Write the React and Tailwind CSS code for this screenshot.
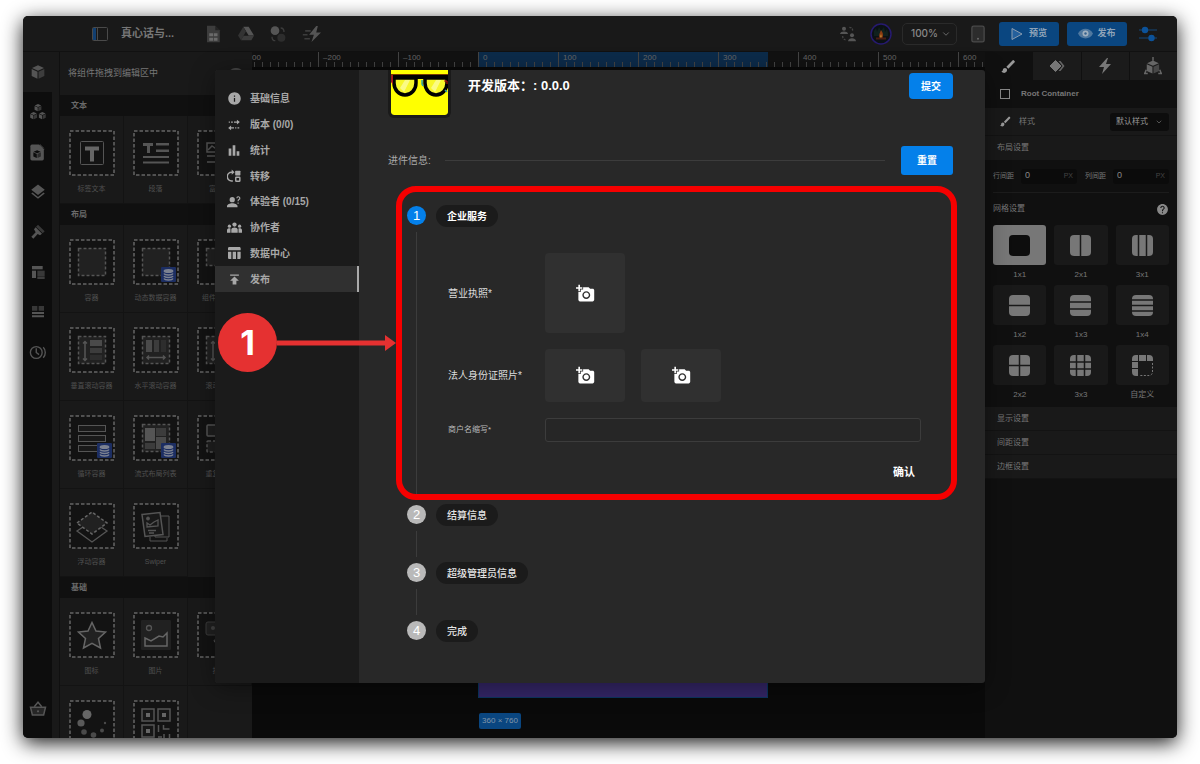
import React, { useState } from 'react';
import clsx from 'clsx';
import {
  MdAddAPhoto,
  MdBarChart,
  MdBrush,
  MdHelp,
  MdInfo,
  MdLayers,
  MdPublish,
  MdTableChart,
} from 'react-icons/md';
import { ChevronDown } from 'lucide-react';

/* ---------- small icons ---------- */

const VersionIcon = () => (
  <svg viewBox="0 0 24 24" className="h-[14px] w-[14px]" fill="currentColor">
    <path d="M17 3l5 4-5 4V8h-5V6h5zM7 13v3h5v2H7v3l-5-4z" />
    <path d="M3 6h2v2H3zM7 6h3v2H7zM14 16h2v2h-2zM18 16h3v2h-3z" />
  </svg>
);

const TransferIcon = () => (
  <svg viewBox="0 0 24 24" className="h-[14px] w-[14px]" fill="none" stroke="currentColor" strokeWidth="2.500">
    <path d="M10 20.500H8A7.500 7.500 0 0 1 8 5.500h2" />
    <path d="M8 1l5 4.500L8 10z" fill="currentColor" stroke="none" />
    <rect x="14" y="3" width="9" height="8" rx="1" fill="currentColor" stroke="none" />
    <rect x="15" y="14" width="7" height="7" rx="1" />
  </svg>
);

const TesterIcon = () => (
  <svg viewBox="0 0 24 24" className="h-[14px] w-[14px]" fill="currentColor">
    <circle cx="9" cy="8" r="4.500" />
    <path d="M0 21v-2c0-3 5-5 9-5s9 2 9 5v2z" />
    <path d="M17 5.500a2.500 2.500 0 1 1 3.500 2.300c-1.500.7-1.500 1.400-1.500 3M19 13v2" fill="none" stroke="currentColor" strokeWidth="2" />
  </svg>
);

const TeamIcon = () => (
  <svg viewBox="0 0 28 22" className="h-3 w-[15px]" fill="currentColor">
    <circle cx="14" cy="4.500" r="4" />
    <circle cx="4.500" cy="7.500" r="3" />
    <circle cx="23.500" cy="7.500" r="3" />
    <path d="M8 20v-6c0-5 12-5 12 0v6zM0 20v-5c0-3 4-4 6.500-3V20zM28 20v-5c0-3-4-4-6.500-3V20z" />
  </svg>
);

const Cube = ({ x = 0, y = 0, s = 1 }) => (
  <g transform={`translate(${x} ${y}) scale(${s})`}>
    <path d="M12 2l9 4-9 4-9-4z" />
    <path d="M2.500 7.500l8.700 4V22l-8.700-4z" />
    <path d="M21.500 7.500l-8.700 4V22l8.700-4z" opacity="0.6" />
  </g>
);

const CubeIcon = () => (
  <svg viewBox="0 0 24 24" className="h-4 w-4" fill="currentColor"><Cube /></svg>
);

const CubesIcon = () => (
  <svg viewBox="0 0 24 24" className="h-4 w-4" fill="currentColor">
    <Cube x={5.500} y={-1} s={0.54} />
    <Cube x={-1} y={11} s={0.54} />
    <Cube x={12} y={11} s={0.54} />
  </svg>
);

const PageCubeIcon = () => (
  <svg viewBox="0 0 24 24" className="h-[19px] w-[19px]" fill="currentColor">
    <path d="M5 2h9l6 6v12a2 2 0 0 1-2 2H5a2 2 0 0 1-2-2V4a2 2 0 0 1 2-2z" />
    <path d="M15 1l6 6h-6z" opacity="0.6" />
    <g fill="#0d0d0d"><Cube x={5.500} y={8} s={0.5} /></g>
  </svg>
);

const BrushHeadIcon = () => (
  <svg viewBox="0 0 24 24" className="h-4 w-4" fill="currentColor">
    <path d="M12 1l10 10-3 3L9 4z" opacity="0.6" />
    <path d="M8.500 5L18 14.500l-3 2.500-3.500-2L5 22l-3-3 6.500-6.500L6 8z" />
  </svg>
);

const LayoutIcon = () => (
  <svg viewBox="0 0 24 24" className="h-4 w-4" fill="currentColor">
    <rect x="3" y="3" width="16" height="5" />
    <rect x="3" y="10" width="6" height="11" />
    <rect x="11" y="10" width="11" height="9" opacity="0.6" />
    <rect x="11" y="20" width="11" height="2" />
  </svg>
);

const ListIcon = () => (
  <svg viewBox="0 0 24 24" className="h-4 w-4" fill="currentColor">
    <path d="M3 3h8v7H3zM13 3h8v7h-8z" opacity="0.6" />
    <path d="M3 12h18v3H3zM3 17h18v3H3z" />
  </svg>
);

const HistoryIcon = () => (
  <svg viewBox="0 0 26 24" className="h-[17px] w-[18px]" fill="none" stroke="currentColor" strokeWidth="2">
    <circle cx="10.500" cy="12" r="8.500" />
    <path d="M10.500 6v6l4 3M20.500 4.500c4 4 4 11 0 15" />
  </svg>
);

const BasketIcon = () => (
  <svg viewBox="0 0 24 24" className="h-[18px] w-[18px]" fill="none" stroke="currentColor" strokeWidth="2">
    <path d="M2 9.500h20L19.500 20h-15z" fill="#262626" />
    <path d="M7 9l5-6 5 6" />
    <circle cx="12" cy="15" r="1.500" fill="currentColor" stroke="none" />
  </svg>
);

const PanelIcon = () => (
  <svg viewBox="0 0 16 14" className="h-[14px] w-4" fill="none">
    <rect x="0.500" y="0.500" width="15" height="13" rx="1" stroke="#4a4a4a" />
    <rect x="1" y="1" width="3" height="12" fill="#123f70" />
    <path d="M5.500 1v12" stroke="#4a4a4a" />
  </svg>
);

const SheetIcon = () => (
  <svg viewBox="0 0 24 24" className="h-[18px] w-[18px]">
    <path d="M4 1h11l6 6v16H4z" fill="#3c3c3c" />
    <path d="M15 1v6h6z" fill="#232323" />
    <path d="M7 11h5v4H7zM13 11h5v4h-5zM7 17h5v4H7zM13 17h5v4h-5z" fill="#6a6a6a" />
  </svg>
);

const DriveIcon = () => (
  <svg viewBox="0 0 24 22" className="h-[15px] w-4">
    <path d="M8 1h8l8 13h-8z" fill="#555" />
    <path d="M8 1l4 7-7.500 13L0 14z" fill="#333" />
    <path d="M8.500 14.500H24L20 21H4.500z" fill="#3c3c3c" />
  </svg>
);

const SwapIcon = () => (
  <svg viewBox="0 0 24 24" className="h-4 w-4">
    <circle cx="7.500" cy="7" r="6.500" fill="#555" />
    <circle cx="17" cy="17.500" r="6" fill="#2d2d2d" />
    <path d="M16 3c3 0 5 2 5 6M3 16c0 4 2 6 5 6" fill="none" stroke="#3c3c3c" strokeWidth="2" />
  </svg>
);

const FastBoltIcon = () => (
  <svg viewBox="0 0 24 22" className="h-[18px] w-[19px]">
    <path d="M18 1L9 12h6l-3 9L24 9h-6l2-8z" fill="#555" />
    <path d="M4 7h7M1 12h6M3 17h7" stroke="#3c3c3c" strokeWidth="2" />
  </svg>
);

const PeopleIcon = () => (
  <svg viewBox="0 0 24 24" className="h-4 w-4" fill="#555">
    <circle cx="6" cy="4" r="3" />
    <path d="M0 12c0-5 12-5 12 0z" />
    <circle cx="18" cy="14" r="3" />
    <path d="M12 23c0-6 12-6 12 0z" />
    <path d="M14 2c4 0 5 2 5 6M4 15c0 4 2 6 6 6" fill="none" stroke="#444" strokeWidth="2" strokeDasharray="3 2" />
  </svg>
);

const Avatar = () => (
  <svg viewBox="0 0 22 22" className="h-[22px] w-[22px]">
    <circle cx="11" cy="11" r="10" fill="#0b1114" stroke="#261a70" strokeWidth="1.500" />
    <path d="M4 8l2-3 1 4 2-5 2 4 3-4 1 5 2-3 1 4v3H4z" fill="#10211e" />
    <path d="M11 7c2 3 2.500 4.500 1.500 8h-3C8.500 11.500 10 10 11 7z" fill="#8a3c12" />
    <path d="M11 11c1 2 1 2.500 .5 4h-1.500c-.5-2 .5-2.500 1-4z" fill="#b8782a" />
    <path d="M6 15.500h10" stroke="#4a1d12" strokeWidth="2" />
  </svg>
);

const TabletIcon = () => (
  <svg viewBox="0 0 16 20" className="h-[18px] w-[14px]">
    <rect x="1" y="1" width="14" height="18" rx="2" fill="#2c2c2c" stroke="#4a4a4a" strokeWidth="1.500" />
    <circle cx="8" cy="15.500" r="1.200" fill="#666" />
  </svg>
);

const SlidersIcon = () => (
  <svg viewBox="0 0 18 16" className="h-4 w-[18px]">
    <path d="M0 4h18M0 12h18" stroke="#16385a" strokeWidth="1.500" />
    <circle cx="6" cy="4" r="3.200" fill="#0c5299" />
    <circle cx="12.500" cy="12" r="3.200" fill="#0c5299" />
  </svg>
);

const PlayIcon = () => (
  <svg viewBox="0 0 12 14" className="h-[14px] w-3">
    <path d="M1 1.500l10 5.500-10 5.500z" fill="#25609c" stroke="#8a9cb0" strokeLinejoin="round" />
  </svg>
);

const EyeIcon = () => (
  <svg viewBox="0 0 15 11" className="h-[11px] w-[15px]">
    <path d="M0 5.500C3-1 12-1 15 5.500 12 12 3 12 0 5.500z" fill="#4f789f" />
    <circle cx="7.500" cy="5.500" r="3" fill="#9fb0c0" />
    <circle cx="7.500" cy="5.500" r="1.200" fill="#35618d" />
  </svg>
);

const DiamondsIcon = () => (
  <svg viewBox="0 0 18 14" className="h-[14px] w-[18px]">
    <path d="M7.500 1.500L13 7l-5.500 5.500L2 7z" fill="#777" stroke="#777" strokeLinejoin="round" />
    <path d="M10.500 2h2l4 5-4 5h-2l4-5z" fill="#666" />
  </svg>
);

const BoltIcon = () => (
  <svg viewBox="0 0 12 16" className="h-4 w-3" fill="#777">
    <path d="M8 0L0 9h5l-2 7 9-10H7l2-6z" />
  </svg>
);

const RobotCubeIcon = () => (
  <svg viewBox="0 0 24 24" className="h-[18px] w-[18px]" fill="#666">
    <Cube x={1.500} y={3} s={0.87} />
    <path d="M12 0v5M3 17l-2 5M21 17l2 5M0 22h5M19 22h5" stroke="#666" strokeWidth="2" fill="none" />
  </svg>
);

/* ---------- component library tiles ---------- */

const DataBadge = () => (
  <g>
    <rect x="28" y="28" width="15" height="15" rx="1" fill="#1c2e63" />
    <g fill="none" stroke="#7c8291" strokeWidth="1.400">
      <ellipse cx="35.500" cy="32" rx="4.200" ry="1.300" fill="#7c8291" />
      <path d="M31 34.500c1 2 8 2 9 0M31 37c1 2 8 2 9 0M31 39.500c1 2 8 2 9 0" />
    </g>
  </g>
);

const InnerBox = () => (
  <rect x="9.500" y="9.500" width="27" height="27" fill="#212121" stroke="#555" strokeWidth="1.500" strokeDasharray="3 2" />
);

const drawings = {
  label: (
    <>
      <rect x="11.500" y="11.500" width="23" height="23" rx="1" fill="none" stroke="#555" />
      <path d="M16 16.500h14v4h-5v11h-4v-11h-5z" fill="#666" />
    </>
  ),
  paragraph: (
    <g fill="#555">
      <path d="M10 13h10v3h-3v7h-3v-7h-4z" />
      <path d="M23 13h13v2.500H23zM23 19.500h13V22H23zM10 26h26v2H10zM10 31.500h26v2H10z" />
    </g>
  ),
  rich: (
    <g fill="none" stroke="#555" strokeWidth="1.500">
      <rect x="10" y="13" width="12" height="9" />
      <path d="M11 20l4-4 3 2 4-4M10 26h26M10 32h26M26 14h10M26 20h10" />
    </g>
  ),
  box: <InnerBox />,
  dataBox: (<><InnerBox /><DataBadge /></>),
  slotBox: (
    <rect x="9.500" y="9.500" width="27" height="17" fill="#212121" stroke="#555" strokeWidth="1.500" strokeDasharray="3 2" />
  ),
  vScroll: (
    <>
      <InnerBox />
      <path d="M16 15v18M14 16.500l2-2 2 2M14 31.500l2 2 2-2" fill="none" stroke="#555" strokeWidth="1.500" />
      <rect x="21" y="13" width="12" height="6" fill="#4a4a4a" />
      <rect x="21" y="21" width="12" height="5" fill="#3c3c3c" />
      <rect x="21" y="28" width="12" height="5" fill="#2d2d2d" />
    </>
  ),
  hScroll: (
    <>
      <InnerBox />
      <rect x="13" y="13" width="6" height="12" fill="#4a4a4a" />
      <rect x="21" y="13" width="5" height="12" fill="#3c3c3c" />
      <rect x="28" y="13" width="5" height="12" fill="#2d2d2d" />
      <path d="M14 30.500h18M16 28.500l-2 2 2 2M30 28.500l2 2-2 2" fill="none" stroke="#555" strokeWidth="1.500" />
    </>
  ),
  loop: (
    <>
      <g fill="#1a1a1a" stroke="#555">
        <rect x="9.500" y="10.500" width="27" height="6" />
        <rect x="9.500" y="20.500" width="27" height="6" />
        <rect x="9.500" y="30.500" width="27" height="6" />
      </g>
      <DataBadge />
    </>
  ),
  masonry: (
    <>
      <InnerBox />
      <rect x="12" y="13" width="10" height="13" fill="#555" />
      <rect x="23" y="13" width="10" height="8" fill="#3c3c3c" />
      <rect x="12" y="28" width="10" height="6" fill="#3c3c3c" />
      <rect x="23" y="22" width="10" height="12" fill="#4a4a4a" />
      <DataBadge />
    </>
  ),
  repeat: (
    <g fill="#1f1f1f" stroke="#555" strokeWidth="1.500">
      <rect x="10" y="10" width="26" height="11" rx="1" />
      <rect x="10" y="26" width="26" height="11" rx="1" strokeDasharray="3 2" />
    </g>
  ),
  floating: (
    <>
      <path d="M8 28l15-10 15 10-15 11z" fill="none" stroke="#555" strokeWidth="1.300" />
      <path d="M8 20L23 9l15 11-15 11z" fill="#212121" stroke="#666" strokeWidth="1.500" strokeDasharray="3 2" />
    </>
  ),
  swiper: (
    <g stroke="#555" fill="#171717">
      <path d="M22 13h14v21H22z" />
      <path d="M17 34v4h17v-3" fill="none" />
      <path d="M9 11.500l18-2 3 22-18 2z" strokeWidth="1.500" fill="#191919" />
      <circle cx="15" cy="15.500" r="1.500" fill="#555" />
      <path d="M14 24v-4l3 2 4-3 4-2v6zM15 27.500h8M16 30h5" fill="none" strokeWidth="1.300" />
    </g>
  ),
  star: (
    <path
      d="M23 10.500l4 8.600 9.500 1-7 6.400 2 9.500-8.500-4.700-8.500 4.700 2-9.500-7-6.400 9.500-1z"
      fill="#212121" stroke="#666" strokeWidth="1.500"
    />
  ),
  image: (
    <>
      <rect x="8" y="8" width="30" height="30" rx="1" fill="#212121" />
      <circle cx="16" cy="16" r="2.500" fill="none" stroke="#555" strokeWidth="1.300" />
      <path d="M12 34v-8l6 3 8-5 4 1 4-4v13z" fill="none" stroke="#666" strokeWidth="1.500" />
    </>
  ),
  button: (
    <>
      <rect x="9" y="10" width="28" height="13" rx="2" fill="#212121" stroke="#3c3c3c" />
      <circle cx="16" cy="16" r="2" fill="#444" />
      <path d="M23 36l-6-7c0-2 3-2 6 2" fill="none" stroke="#555" />
    </>
  ),
  loading: (
    <g fill="#4a4a4a">
      <circle cx="18" cy="14.500" r="4.500" fill="#666" />
      <circle cx="12" cy="23" r="3.600" fill="#5a5a5a" />
      <circle cx="15" cy="32" r="2.800" />
      <circle cx="24.500" cy="35" r="2.800" />
      <circle cx="33" cy="30.500" r="2" />
      <circle cx="36" cy="23" r="1.200" />
    </g>
  ),
  qr: (
    <g fill="#171717" stroke="#555" strokeWidth="1.500">
      <rect x="9" y="9" width="12" height="12" />
      <rect x="25" y="9" width="12" height="12" />
      <rect x="9" y="25" width="12" height="12" />
      <path d="M13 13h4v4h-4zM29 13h4v4h-4zM13 29h4v4h-4z" fill="#666" stroke="none" />
      <path d="M25.500 25v7M25 37h4M30.500 25v4h6M36.500 34v4M31 34v4" fill="none" />
    </g>
  ),
};

const library = [
  {
    title: '文本',
    items: [['label', '标签文本'], ['paragraph', '段落'], ['rich', '富文本']],
  },
  {
    title: '布局',
    items: [
      ['box', '容器'], ['dataBox', '动态数据容器'], ['slotBox', '组件容器组'],
      ['vScroll', '垂直滚动容器'], ['hScroll', '水平滚动容器'], ['vScroll', '滚动容器'],
      ['loop', '循环容器'], ['masonry', '流式布局列表'], ['repeat', '重复容器'],
      ['floating', '浮动容器'], ['swiper', 'Swiper'],
    ],
  },
  {
    title: '基础',
    items: [['star', '图标'], ['image', '图片'], ['button', '按钮'], ['loading'], ['qr']],
  },
];

const railIcons = [
  ['组件', <CubeIcon />],
  ['组件库', <CubesIcon />],
  ['页面', <PageCubeIcon />],
  ['图层', <MdLayers size={18} />],
  ['主题', <BrushHeadIcon />],
  ['布局', <LayoutIcon />],
  ['列表', <ListIcon />],
  ['历史', <HistoryIcon />],
];

const menu = [
  ['基础信息', <MdInfo size={15} />],
  ['版本 (0/0)', <VersionIcon />],
  ['统计', <MdBarChart size={17} />],
  ['转移', <TransferIcon />],
  ['体验者 (0/15)', <TesterIcon />],
  ['协作者', <TeamIcon />],
  ['数据中心', <MdTableChart size={16} />],
  ['发布', <MdPublish size={15} />],
];

const gridPresets = [
  { name: '1x1', v: [], h: [] },
  { name: '2x1', v: [10.5], h: [] },
  { name: '3x1', v: [6.5, 14.5], h: [] },
  { name: '1x2', v: [], h: [10.5] },
  { name: '1x3', v: [], h: [7, 14] },
  { name: '1x4', v: [], h: [5, 10.5, 16] },
  { name: '2x2', v: [10.5], h: [10.5] },
  { name: '3x3', v: [6.5, 14.5], h: [7, 14] },
  { name: '自定义', custom: true },
];

const GridGlyph = ({ preset, active }) => {
  if (preset.custom) {
    return (
      <svg viewBox="0 0 21 21" className="h-[21px] w-[21px]">
        <path d="M4 0h2v6H0V4a4 4 0 0 1 4-4zM7 0h7v6H7zM15 0h2a4 4 0 0 1 4 4v2h-6zM0 7h6v6H0zM0 14h6v7H4a4 4 0 0 1-4-4z" fill="#777" />
        <path d="M20.500 8v9a3.500 3.500 0 0 1-3.500 3.500H7" fill="none" stroke="#777" strokeDasharray="2 1.500" />
      </svg>
    );
  }
  return (
    <svg viewBox="0 0 21 21" className="h-[21px] w-[21px]">
      <rect width="21" height="21" rx="4" fill={active ? '#0d0d0d' : '#777'} />
      {preset.v.map((x) => <path key={x} d={`M${x} 0v21`} stroke="#191919" strokeWidth="1.500" />)}
      {preset.h.map((y) => <path key={y} d={`M0 ${y}h21`} stroke="#191919" strokeWidth="1.500" />)}
    </svg>
  );
};

/* ---------- page parts ---------- */

const TopBar = () => (
  <header className="flex h-9 shrink-0 items-center justify-between border-b border-[#111] bg-[#191919] pr-5 pl-[69px]">
    <div className="flex items-center">
      <button aria-label="侧栏"><PanelIcon /></button>
      <h1 className="ml-[13px] w-[55px] text-[11px] font-bold whitespace-nowrap text-[#777]">真心话与...</h1>
      <div className="ml-7 flex items-center gap-4">
        <button aria-label="表格"><SheetIcon /></button>
        <button aria-label="云盘"><DriveIcon /></button>
        <button aria-label="切换"><SwapIcon /></button>
        <button aria-label="动作"><FastBoltIcon /></button>
      </div>
    </div>
    <div className="flex items-center">
      <button aria-label="协作"><PeopleIcon /></button>
      <button aria-label="账户" className="ml-[14px]"><Avatar /></button>
      <div className="relative ml-[10px] flex">
        <select
          aria-label="缩放"
          className="h-[22px] w-[55px] appearance-none rounded-[5px] border border-[#2a2a2a] bg-transparent pl-2 font-['Inter',sans-serif] text-[10px] font-medium text-[#888]"
        >
          <option>100%</option>
        </select>
        <ChevronDown size={10} className="pointer-events-none absolute inset-y-0 right-[6px] my-auto text-[#777]" />
      </div>
      <button aria-label="设备" className="ml-[14px]"><TabletIcon /></button>
      <button className="ml-[14px] flex h-6 w-[60px] items-center justify-center gap-[6px] rounded-[3px] bg-[#0a4680] text-[9px] font-bold text-[#8fa3b8]">
        <PlayIcon /> 预览
      </button>
      <button className="ml-2 flex h-6 w-[60px] items-center justify-center gap-1 rounded-[3px] bg-[#0a4680] text-[9px] font-bold text-[#8fa3b8]">
        <EyeIcon /> 发布
      </button>
      <button aria-label="设置" className="ml-3"><SlidersIcon /></button>
    </div>
  </header>
);

const IconRail = () => (
  <nav className="flex w-[29px] shrink-0 flex-col bg-[#0d0d0d] text-[#555]">
    {railIcons.map(([name, icon], index) => (
      <button
        key={name}
        aria-label={name}
        className={clsx('flex h-10 shrink-0 items-center justify-center', index === 0 && 'bg-[#191919]')}
      >
        {icon}
      </button>
    ))}
    <button aria-label="市场" className="mt-auto mb-5 flex justify-center"><BasketIcon /></button>
  </nav>
);

const LibraryPanel = () => (
  <aside className="ml-[7px] w-[193px] shrink-0 overflow-hidden border-l border-[#101010]">
    <div className="flex h-[43px] items-center justify-between pr-[9px] pl-2 text-[9px] text-[#777]">
      将组件拖拽到编辑区中
      <button aria-label="搜索" className="h-3 w-[14px] rounded-[6px] bg-[#444]" />
    </div>
    {library.map((section) => (
      <section key={section.title}>
        <h2 className="flex h-[21px] items-center bg-[#101010] pl-[11px] text-[8px] font-bold text-[#6a6a6a]">{section.title}</h2>
        <div className="grid grid-cols-3">
          {section.items.map(([kind, name], index) => (
            <button
              key={index}
              aria-label={name || kind}
              className="flex h-[88px] flex-col items-center border-r border-b border-[#131313] pt-[14px] text-[7px] whitespace-nowrap text-[#505050]"
            >
              <svg viewBox="0 0 46 46" className="h-[46px] w-[46px]">
                <rect x="1" y="1" width="44" height="44" fill="#131313" stroke="#666" strokeWidth="1.500" strokeDasharray="3.500 2" />
                {drawings[kind]}
              </svg>
              {name && <span className="mt-2">{name}</span>}
            </button>
          ))}
        </div>
      </section>
    ))}
  </aside>
);

const rulerMarks = ['–200', '–100', '0', '100', '200', '300', '400', '500', '600'];

const RulerTicks = () => (
  <svg viewBox="0 0 79 5" className="absolute right-0 bottom-0 h-[5px] w-[79px]">
    <path d="M7.500 0v5M15.500 0v5M23.500 0v5M31.500 0v5M39.500 0v5M47.500 0v5M55.500 0v5M63.500 0v5M71.500 0v5" stroke="#444" />
  </svg>
);

const Canvas = () => (
  <main className="flex min-w-0 flex-1 flex-col overflow-hidden bg-[#0a0a0a]">
    <div className="relative mb-[3px] h-[15px] shrink-0 overflow-hidden bg-[#121212] font-['Liberation_Sans'] text-[8px] leading-3 text-[#666]">
      <div className="absolute left-[226px] h-full w-[290px] bg-[#0c2b4a]" />
      <div className="relative flex h-full">
        <div className="relative w-[66px] shrink-0 overflow-hidden">
          00
          <RulerTicks />
        </div>
        {rulerMarks.map((mark) => (
          <div key={mark} className="relative w-20 shrink-0 border-l border-[#444] pl-1">
            {mark}
            <RulerTicks />
          </div>
        ))}
      </div>
    </div>
    <div className="ml-[226px] w-[290px] flex-1 border border-[#0c3560] bg-[#342667]" />
    <span className="mt-[15px] mb-[9px] ml-[227px] flex h-4 w-[42px] shrink-0 items-center justify-center rounded-[2px] bg-[#0a4680] font-['Liberation_Sans'] text-[8px] text-[#8296aa]">
      360 × 760
    </span>
  </main>
);

const GapField = ({ id, label }) => (
  <div className="flex flex-1 items-center">
    <label htmlFor={id} className="w-7 text-[7px] text-[#777]">{label}</label>
    <div className="flex h-[15px] flex-1 items-center rounded-[3px] bg-[#0b0b0b] px-1">
      <input id={id} defaultValue="0" className="w-full min-w-0 bg-transparent font-['Liberation_Sans'] text-[9px] text-[#888]" />
      <span className="font-['Liberation_Sans'] text-[7px] text-[#444]">PX</span>
    </div>
  </div>
);

const StylePanel = () => {
  const [preset, setPreset] = useState('1x1');

  return (
    <aside className="w-48 shrink-0 overflow-hidden bg-[#101010] text-[8px] text-[#777]">
      <div className="grid h-7 grid-cols-4 gap-px">
        <button aria-label="样式" className="flex items-center justify-center text-[#999]"><MdBrush size={17} /></button>
        <button aria-label="数据" className="flex items-center justify-center bg-[#1b1b1b]"><DiamondsIcon /></button>
        <button aria-label="动作" className="flex items-center justify-center bg-[#1b1b1b]"><BoltIcon /></button>
        <button aria-label="高级" className="flex items-center justify-center bg-[#1b1b1b]"><RobotCubeIcon /></button>
      </div>
      <div className="flex h-7 items-center pl-[15px] font-['Liberation_Sans'] font-bold">
        <span className="mr-[11px] h-[10px] w-[10px] border border-[#888]" />
        Root Container
      </div>
      <div className="flex h-7 items-center border-b border-[#131313] bg-[#191919] pr-2 pl-[14px]">
        <MdBrush size={13} className="mr-[7px] text-[#999]" />
        <label htmlFor="style-preset">样式</label>
        <div className="relative ml-auto flex">
          <select id="style-preset" className="h-[18px] w-[59px] appearance-none rounded-[3px] bg-[#0d0d0d] pl-[6px] text-[8px] text-[#999]">
            <option>默认样式</option>
          </select>
          <ChevronDown size={8} className="pointer-events-none absolute inset-y-0 right-[6px] my-auto" />
        </div>
      </div>
      <h3 className="flex h-6 items-center bg-[#191919] pl-3">布局设置</h3>
      <div className="px-2">
        <div className="flex h-[33px] items-center gap-2 border-b border-[#1c1c1c]">
          <GapField id="row-gap" label="行间距" />
          <GapField id="column-gap" label="列间距" />
        </div>
        <div className="flex h-8 items-center justify-between">
          网格设置
          <MdHelp size={13} className="text-[#888]" />
        </div>
        <div className="grid grid-cols-3 gap-x-2 gap-y-1 pb-[6px]">
          {gridPresets.map((item) => (
            <div key={item.name} className="flex flex-col items-center">
              <button
                aria-label={item.name}
                onClick={() => setPreset(item.name)}
                className={clsx(
                  'flex h-10 w-full items-center justify-center rounded-[3px]',
                  preset === item.name ? 'bg-[#777]' : 'bg-[#191919]'
                )}
              >
                <GridGlyph preset={item} active={preset === item.name} />
              </button>
              <span className="mt-1 leading-3">{item.name}</span>
            </div>
          ))}
        </div>
      </div>
      {['显示设置', '间距设置', '边框设置'].map((title) => (
        <h3 key={title} className="flex h-6 items-center border-b border-[#131313] bg-[#191919] pl-3">{title}</h3>
      ))}
    </aside>
  );
};

/* ---------- publish dialog ---------- */

const AppLogo = () => (
  <div className="h-12 overflow-hidden rounded-b-[6px] border-3 border-t-0 border-[#1a1a1a]">
    <svg viewBox="0 0 57 45" className="h-[45px] w-[57px] rounded-b-[3px]">
      <rect width="57" height="45" fill="#ff0" />
      <path d="M0 4.500h57" stroke="#7a3b00" />
      <path d="M0 5h57v4H0z" />
      <g fill="#f7f72a" stroke="#000" strokeWidth="3.500">
        <path d="M3 8v5a11 12 0 0 0 22 0V8z" />
        <path d="M34 8v5a11 12 0 0 0 22 0V8z" />
      </g>
      <path d="M9 18l5-8h5l-6 12zM40 18l5-8h5l-6 12z" fill="#fbfb85" />
      <path d="M0 5v7l2 3V5z" fill="#a01818" />
      <path d="M31 10v4l1 2M54 20l2 2" stroke="#3aa" strokeWidth="1.500" />
      <path d="M53 11h3v3" stroke="#c01010" fill="none" />
    </svg>
  </div>
);

const UploadTile = ({ name, tall }) => (
  <button
    type="button"
    aria-label={name}
    className={clsx('flex w-20 items-center justify-center rounded-[4px] bg-[#303030] text-white', tall ? 'h-20' : 'h-[53px]')}
  >
    <MdAddAPhoto size={19} />
  </button>
);

const Step = ({ number, title, active, last, children }) => (
  <li className="flex gap-[10px]">
    <div className="flex w-[19px] flex-col items-center">
      <span
        className={clsx(
          'mt-px flex h-[19px] w-[19px] shrink-0 items-center justify-center rounded-full font-["Liberation_Sans"] text-[13px] text-white',
          active ? 'bg-[#0480ea]' : 'bg-[#b9b9b9]'
        )}
      >
        {number}
      </span>
      {!last && <span className="mt-[7px] mb-[5px] w-px flex-1 bg-[#3c3c3c]" />}
    </div>
    <div className={clsx('flex-1', !children && !last && 'pb-9')}>
      <h3 className={clsx('flex h-[22px] w-fit items-center rounded-full bg-[#1b1b1b] px-[11px] text-[10px]', active ? 'font-bold text-white' : 'font-medium text-[#e4e4e4]')}>
        {title}
      </h3>
      {children}
    </div>
  </li>
);

const CompanyForm = () => (
  <form className="flex flex-col gap-4 pt-[26px] pr-8 pb-5 pl-3 text-[10px] text-[#ddd]">
    <div className="flex items-center">
      <span className="w-[97px]">营业执照*</span>
      <UploadTile name="上传营业执照" tall />
    </div>
    <div className="flex items-center">
      <span className="w-[97px]">法人身份证照片*</span>
      <div className="flex gap-4">
        <UploadTile name="上传身份证正面" />
        <UploadTile name="上传身份证反面" />
      </div>
    </div>
    <div className="flex items-center">
      <label htmlFor="merchant" className="w-[97px] text-[8px] text-[#bbb]">商户名缩写*</label>
      <input id="merchant" className="h-6 flex-1 rounded-[3px] border border-[#3c3c3c] bg-[#262626] px-2 text-white" />
    </div>
    <button type="button" className="mt-[2px] mr-[6px] h-6 self-end text-[11px] font-bold text-white">确认</button>
  </form>
);

const PublishDialog = () => {
  const [current, setCurrent] = useState('发布');

  return (
    <div role="dialog" aria-label="发布" className="absolute inset-x-48 top-[54px] bottom-[55px] flex rounded-[3px] bg-[#282828] shadow-[0_4px_24px_rgba(0,0,0,0.4)]">
      <nav className="w-36 shrink-0 rounded-l-[3px] bg-[#1b1b1b] pt-4">
        <div className="grid h-[206px] auto-rows-fr">
          {menu.map(([name, icon]) => (
            <button
              key={name}
              onClick={() => setCurrent(name)}
              className={clsx(
                'flex items-center pl-[11px] text-[10px] font-bold text-[#a8a8a8]',
                current === name && 'border-r-2 border-[#aaa] bg-[#303030]'
              )}
            >
              <span className="flex w-4 justify-center">{icon}</span>
              <span className="ml-2">{name}</span>
            </button>
          ))}
        </div>
      </nav>

      <div className="min-w-0 flex-1 overflow-hidden pr-8 pl-[29px]">
        <div className="flex items-start">
          <AppLogo />
          <h2 className="mt-[6px] ml-[17px] text-[13px] leading-5 font-bold text-white">开发版本：: 0.0.0</h2>
          <button className="mt-[3px] ml-auto h-[26px] w-11 rounded-[4px] bg-[#0480ea] text-[10px] font-bold text-white">提交</button>
        </div>
        <div className="mt-7 flex items-center">
          <span className="text-[10px] text-[#aaa]">进件信息:</span>
          <hr className="mr-4 ml-[14px] flex-1 border-[#3c3c3c]" />
          <button className="h-[29px] w-[52px] rounded-[3px] bg-[#0480ea] text-[10px] font-bold text-white">重置</button>
        </div>
        <ol className="mt-[30px] ml-[19px]">
          <Step number={1} title="企业服务" active><CompanyForm /></Step>
          <Step number={2} title="结算信息" />
          <Step number={3} title="超级管理员信息" />
          <Step number={4} title="完成" last />
        </ol>
      </div>

      {/* callout over the form */}
      <div className="pointer-events-none absolute top-[116px] right-7 left-[181px] h-[314px] rounded-[20px] border-6 border-[#f60000]" />
      <div className="pointer-events-none absolute top-[243px] left-[3px] flex items-center">
        <span className="flex h-[59px] w-[59px] items-center justify-center rounded-full bg-[#e53131] font-['Inter',sans-serif] text-[34px] font-bold text-white">1</span>
        <svg viewBox="0 0 119 16" className="h-4 w-[119px]" fill="#e53131">
          <path d="M0 5.500h108V0l11 8-11 8v-5.500H0z" />
        </svg>
      </div>
    </div>
  );
};

const App = () => (
  <div className="h-screen bg-white px-[23px] pt-4 pb-[26px] font-['Liberation_Sans','Noto_Sans_CJK_SC',sans-serif]">
    <div className="relative h-full rounded-[5px] shadow-[0_5px_20px_rgba(0,0,0,0.9)]">
      <div className="flex h-full flex-col overflow-hidden rounded-[5px] bg-[#191919]">
        <TopBar />
        <div className="flex min-h-0 flex-1">
          <IconRail />
          <LibraryPanel />
          <Canvas />
          <StylePanel />
        </div>
      </div>
      <PublishDialog />
    </div>
  </div>
);

export default App;
